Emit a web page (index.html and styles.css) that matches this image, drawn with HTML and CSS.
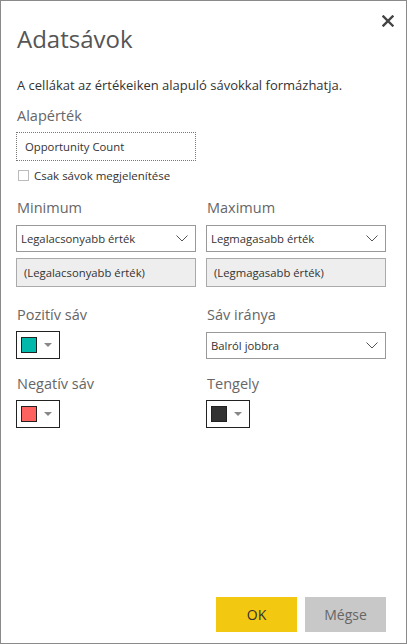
FILE: index.html
```html
<!DOCTYPE html>
<html lang="hu">
<head>
<meta charset="utf-8">
<title>Adatsávok</title>
<link rel="stylesheet" href="styles.css">
</head>
<body>
<div class="dialog">
  <div class="close" aria-label="Bezárás">
    <svg width="12" height="12" viewBox="0 0 12 12"><path d="M1.5 1.5 L10.5 10.5 M10.5 1.5 L1.5 10.5" stroke="#444" stroke-width="2.4" stroke-linecap="square"/></svg>
  </div>
  <h1 class="title">Adatsávok</h1>
  <p class="desc">A cellákat az értékeiken alapuló sávokkal formázhatja.</p>
  <div class="label">Alapérték</div>
  <div class="field focus">Opportunity Count</div>
  <label class="check"><span class="box"></span>Csak sávok megjelenítése</label>

  <div class="grid">
    <div class="col">
      <div class="label">Minimum</div>
      <div class="field select">Legalacsonyabb érték<svg class="chev" width="12" height="7" viewBox="0 0 12 7"><path d="M0.5 0.5 L6 6 L11.5 0.5" fill="none" stroke="#555" stroke-width="1"/></svg></div>
      <div class="field disabled">(Legalacsonyabb érték)</div>
    </div>
    <div class="col">
      <div class="label">Maximum</div>
      <div class="field select">Legmagasabb érték<svg class="chev" width="12" height="7" viewBox="0 0 12 7"><path d="M0.5 0.5 L6 6 L11.5 0.5" fill="none" stroke="#555" stroke-width="1"/></svg></div>
      <div class="field disabled">(Legmagasabb érték)</div>
    </div>

    <div class="col sec">
      <div class="label">Pozitív sáv</div>
      <div class="picker"><span class="swatch teal"></span><span class="tri"></span></div>
    </div>
    <div class="col sec">
      <div class="label">Sáv iránya</div>
      <div class="field select">Balról jobbra<svg class="chev" width="12" height="7" viewBox="0 0 12 7"><path d="M0.5 0.5 L6 6 L11.5 0.5" fill="none" stroke="#555" stroke-width="1"/></svg></div>
    </div>

    <div class="col sec2">
      <div class="label">Negatív sáv</div>
      <div class="picker"><span class="swatch red"></span><span class="tri"></span></div>
    </div>
    <div class="col sec2">
      <div class="label">Tengely</div>
      <div class="picker"><span class="swatch dark"></span><span class="tri"></span></div>
    </div>
  </div>

  <div class="actions">
    <button class="btn ok">OK</button>
    <button class="btn cancel">Mégse</button>
  </div>
</div>
</body>
</html>
```
FILE: styles.css
```css
html, body {
  margin: 0;
  padding: 0;
  background: #fff;
}
body {
  font-family: "Open Sans", "Noto Sans", sans-serif;
  color: #333;
}
.dialog {
  position: relative;
  box-sizing: border-box;
  width: 407px;
  height: 644px;
  border: 1px solid #8a8a8a;
  padding: 0 20px 0 15px;
  display: flex;
  flex-direction: column;
}
.close {
  position: absolute;
  top: 14px;
  right: 12px;
  width: 12px;
  height: 12px;
  line-height: 0;
}
.title {
  margin: 22px 0 0 1px;
  font-size: 24px;
  font-weight: 400;
  line-height: 32px;
  color: #555;
}
.desc {
  margin: 21px 0 0 1px;
  font-size: 13px;
  line-height: 18px;
  color: #333;
}
.label {
  font-size: 14.5px;
  line-height: 20px;
  color: #666;
  margin-left: 1px;
}
.desc + .label {
  margin-top: 12px;
}
.field {
  box-sizing: border-box;
  height: 28px;
  border: 1px solid #999;
  font-size: 11.3px;
  line-height: 26px;
  padding: 0 7px;
  color: #333;
  display: flex;
  align-items: center;
  justify-content: space-between;
  margin-top: 7px;
}
.focus {
  width: 180px;
  height: 29px;
  border: 1px dotted #777;
  padding-left: 8px;
  margin-top: 6px;
}
.check {
  display: flex;
  align-items: center;
  font-size: 11.5px;
  color: #333;
  margin-top: 8px;
  height: 13px;
}
.box {
  box-sizing: border-box;
  width: 11px;
  height: 11px;
  border: 1px solid #bbb;
  margin: 0 5px 0 2px;
}
.grid {
  display: grid;
  grid-template-columns: 180px 180px;
  column-gap: 10px;
  margin-top: 16px;
}
.col {
  display: flex;
  flex-direction: column;
}
.select {
  height: 27px;
  padding: 0 7px 0 4px;
}
.chev {
  display: block;
}
.disabled {
  height: 29px;
  margin-top: 6px;
  background: #eee;
  border-color: #aaa;
  padding-left: 7px;
}
.sec {
  margin-top: 18px;
}
.sec2 {
  margin-top: 15px;
}
.picker {
  box-sizing: border-box;
  width: 44px;
  height: 28px;
  border: 1px solid #222;
  margin-top: 6px;
  display: flex;
  align-items: center;
  padding-left: 4px;
}
.swatch {
  box-sizing: border-box;
  width: 16px;
  height: 16px;
  border: 1px solid #222;
}
.teal { background: #01b8aa; }
.red { background: #fd625e; }
.dark { background: #333; }
.tri {
  width: 0;
  height: 0;
  border-left: 4px solid transparent;
  border-right: 4px solid transparent;
  border-top: 4px solid #888;
  margin-left: 7px;
}
.actions {
  margin-top: auto;
  margin-bottom: 11px;
  display: flex;
  justify-content: flex-end;
  gap: 8px;
}
.btn {
  width: 81px;
  height: 35px;
  border: none;
  font-family: "Open Sans", "Noto Sans", sans-serif;
  font-size: 14px;
  padding: 0;
}
.ok {
  background: #f2c811;
  color: #333;
}
.cancel {
  background: #c8c8c8;
  color: #666;
}
```
